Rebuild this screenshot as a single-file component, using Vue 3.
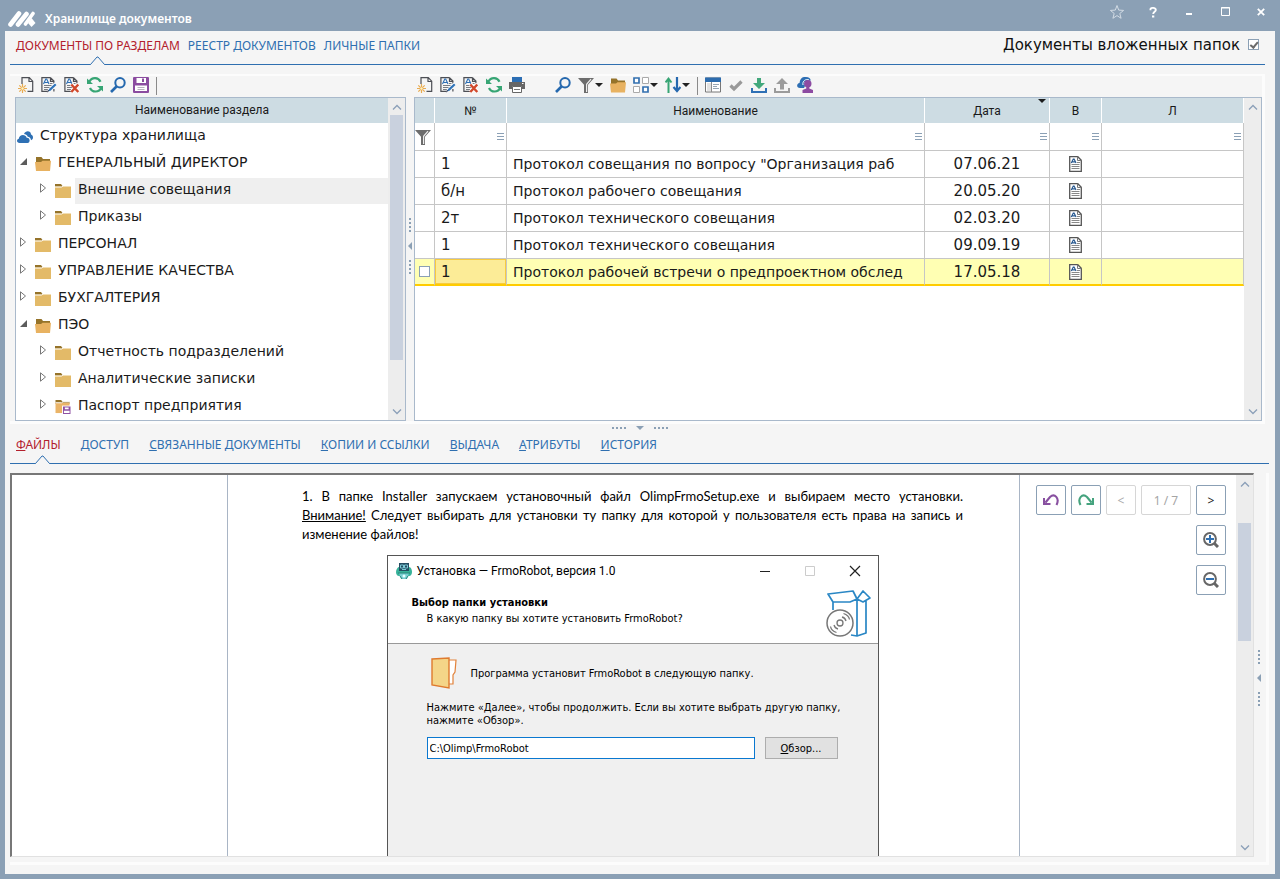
<script setup>
import { ref } from 'vue'

const mainTabs = ['ДОКУМЕНТЫ ПО РАЗДЕЛАМ', 'РЕЕСТР ДОКУМЕНТОВ', 'ЛИЧНЫЕ ПАПКИ']
const activeMain = ref(0)
const detailTabs = ['ФАЙЛЫ', 'ДОСТУП', 'СВЯЗАННЫЕ ДОКУМЕНТЫ', 'КОПИИ И ССЫЛКИ', 'ВЫДАЧА', 'АТРИБУТЫ', 'ИСТОРИЯ']
const activeDetail = ref(0)
const nested = ref(true)
const installPath = ref('C:\\Olimp\\FrmoRobot')

const windowButtons = [
  { icon: 'star', label: 'В избранное' },
  { icon: 'help', label: 'Справка' },
  { icon: 'min', label: 'Свернуть' },
  { icon: 'max', label: 'Развернуть' },
  { icon: 'close', label: 'Закрыть' }
]

const sectionTools = [
  { icon: 'new', label: 'Создать раздел' },
  { icon: 'edit', label: 'Изменить раздел' },
  { icon: 'delete', label: 'Удалить раздел' },
  { icon: 'refresh', label: 'Обновить' },
  { icon: 'search', label: 'Найти' },
  { icon: 'save', label: 'Сохранить' }
]

const documentTools = [
  { icon: 'new', label: 'Создать документ' },
  { icon: 'edit', label: 'Изменить документ' },
  { icon: 'delete', label: 'Удалить документ' },
  { icon: 'refresh', label: 'Обновить' },
  { icon: 'print', label: 'Печать' },
  { icon: 'search', label: 'Найти', gap: true },
  { icon: 'filter', label: 'Фильтр', menu: true },
  { icon: 'open', label: 'Открыть' },
  { icon: 'group', label: 'Группировка', menu: true },
  { icon: 'sort', label: 'Сортировка', menu: true },
  { sep: true },
  { icon: 'form', label: 'Карточка' },
  { icon: 'check', label: 'Утвердить' },
  { icon: 'download', label: 'Загрузить' },
  { icon: 'upload', label: 'Выгрузить' },
  { icon: 'share', label: 'Доступ' }
]

const tree = [
  { name: 'ГЕНЕРАЛЬНЫЙ ДИРЕКТОР', level: 1, open: true, icon: 'open' },
  { name: 'Внешние совещания', level: 2, icon: 'folder', selected: true },
  { name: 'Приказы', level: 2, icon: 'folder' },
  { name: 'ПЕРСОНАЛ', level: 1, icon: 'folder' },
  { name: 'УПРАВЛЕНИЕ КАЧЕСТВА', level: 1, icon: 'folder' },
  { name: 'БУХГАЛТЕРИЯ', level: 1, icon: 'folder' },
  { name: 'ПЭО', level: 1, open: true, icon: 'open' },
  { name: 'Отчетность подразделений', level: 2, icon: 'folder' },
  { name: 'Аналитические записки', level: 2, icon: 'folder' },
  { name: 'Паспорт предприятия', level: 2, icon: 'passport' }
]

const columns = [
  { key: 'num', title: '№' },
  { key: 'name', title: 'Наименование' },
  { key: 'date', title: 'Дата', sorted: true },
  { key: 'kind', title: 'В' },
  { key: 'link', title: 'Л' }
]

const documents = [
  { num: '1', name: 'Протокол совещания по вопросу "Организация раб', date: '07.06.21' },
  { num: 'б/н', name: 'Протокол рабочего совещания', date: '20.05.20' },
  { num: '2т', name: 'Протокол технического совещания', date: '02.03.20' },
  { num: '1', name: 'Протокол технического совещания', date: '09.09.19' },
  { num: '1', name: 'Протокол рабочей встречи о предпроектном обслед', date: '17.05.18', current: true }
]
</script>

<template>
  <div class="window">
    <svg class="sprite" aria-hidden="true">
      <symbol id="i-star" viewBox="0 0 16 16"><path d="M8 1.500l1.700 4.600 4.900.3-3.800 3.100 1.300 4.800L8 11.600l-4.100 2.700 1.300-4.800-3.800-3.100 4.900-.3z" fill="none" stroke="#d3dce5" /></symbol>
      <symbol id="i-help" viewBox="0 0 16 16"><path d="M5.500 6.200V5c0-1.400 5.500-1.800 5.300 1 0 1.900-2.600 1.800-2.600 4M7 12.500h2.300" fill="none" stroke="#fff" stroke-width="1.900" /></symbol>
      <symbol id="i-min" viewBox="0 0 16 16"><path d="M5 10h6" stroke="#fff" stroke-width="2" /></symbol>
      <symbol id="i-max" viewBox="0 0 16 16"><path d="M4.500 3.500h8v8h-8zM4 4h9" fill="none" stroke="#fff" /></symbol>
      <symbol id="i-close" viewBox="0 0 16 16"><path d="M4.800 4.800l6.400 6.400M11.200 4.800l-6.400 6.400" stroke="#fff" stroke-width="1.800" /></symbol>

      <symbol id="i-new" viewBox="0 0 16 16"><path d="M4 7V.600h7.300l3.400 3.600v10.200H9.500M11 .8v3.700h3.500" fill="none" stroke="#4d4f55" stroke-width="1.200" /><path d="M4.500 7v9M0 11.500h9M1.300 8.300l6.400 6.400M7.700 8.300l-6.400 6.400" stroke="#e9ab50" stroke-width="1.200" /><circle cx="4.500" cy="11.500" r="1.200" fill="#fff3c4" /></symbol>
      <symbol id="i-page" viewBox="0 0 16 16"><path d="M9.500.600H.900v13.800H7M9.500.600l3.400 3.500v3M9.500.8v3.500h3.400M12.900 12v2.400" fill="none" stroke="#4d4f55" stroke-width="1.200" /><path d="M2.500 7L4.800 2h.9L8 7M3.800 5.500h3.400" fill="none" stroke="#2c6eb4" stroke-width="1.100" /><path d="M9 6.500h2.500M3 8.500h8M3 10.500h6M3 12.500h4" stroke="#777b82" /></symbol>
      <symbol id="i-edit" viewBox="0 0 16 16"><use href="#i-page" /><path d="M6 15l1-3 6.500-6.500L16 7.500 9.500 14z" fill="#fff" /><path d="M7 14.500L8 12l6-5.500 1.500 1.500-6 5.700z" fill="#2f73b8" /><path d="M6.500 15.200l1-2.200" stroke="#334" /></symbol>
      <symbol id="i-delete" viewBox="0 0 16 16"><use href="#i-page" /><path d="M7.500 7l7 8M14.500 7l-7 8" stroke="#fff" stroke-width="4" /><path d="M7.300 7.500l7 7.500M14.300 7.500l-7 7.500" stroke="#d14a2d" stroke-width="2.500" /></symbol>
      <symbol id="i-refresh" viewBox="0 0 16 16"><path d="M2.200 5C5-.500 11.500.300 13.500 4.800M14.500 10.500c-2.500 5.500-9.500 5-11.500.5" fill="none" stroke="#37a574" stroke-width="2.200" /><path d="M0 1.500V7h6zM16 14.500V9h-6z" fill="#37a574" /></symbol>
      <symbol id="i-search" viewBox="0 0 16 16"><circle cx="10" cy="5.800" r="4.700" fill="none" stroke="#2568ae" stroke-width="2" /><path d="M6.500 9.500L1 15" stroke="#2568ae" stroke-width="2.600" /></symbol>
      <symbol id="i-save" viewBox="0 0 16 16"><path d="M1 0h14a1 1 0 011 1v14a1 1 0 01-1 1H1a1 1 0 01-1-1V1a1 1 0 011-1z" fill="#8b4ca0" /><path d="M3.500 1h9.500v5H3.500z" fill="#fff" /><path d="M9 1.500h2v3.500H9z" fill="#8b4ca0" /><path d="M2 8.500h12V14H2z" fill="#fff" /><path d="M4.500 10.500h7M4.500 12.500h7" stroke="#b9b0bf" /></symbol>
      <symbol id="i-print" viewBox="0 0 16 16"><path d="M3 0h10v5H3z" fill="#2c6eb4" /><path d="M0 5h16v7h-3V9.500H3V12H0z" fill="#666" /><path d="M3.500 9.500h9v6h-9z" fill="#fff" stroke="#666" /><path d="M5 12.500h6" stroke="#777" /><path d="M13 6.500h1.500" stroke="#fff" /></symbol>
      <symbol id="i-filter" viewBox="0 0 16 16"><path d="M0 1h16l-6 6.700V16H6V7.700z" fill="#6d6d6d" /><path d="M13 2.200L8.600 7.300V15" fill="none" stroke="#eee" stroke-width="1.200" /></symbol>
      <symbol id="i-folder" viewBox="0 0 16 15"><path d="M0 1h6l1.500 2H16v2H0z" fill="#95732a" /><path d="M0 3.500h6.500L8 2.900h8V15H0z" fill="#e3ba68" /><path d="M0 4h6.500L8 3h8" fill="none" stroke="#fff" /></symbol>
      <symbol id="i-open" viewBox="0 0 16 15"><path d="M1 1h5.500L8 3h7v4H1z" fill="#95732a" /><path d="M0 6h6l1.500-1.200H16L15 15H1z" fill="#e8b261" /></symbol>
      <symbol id="i-passport" viewBox="0 0 16 16"><path d="M0 1h6l1.500 2H15v2H0z" fill="#95732a" /><path d="M0 4h15v11H0z" fill="#eab468" /><path d="M0 4h6.500L8 3h7" fill="none" stroke="#fff" /><path d="M7 7h9v9H7z" fill="#fff" /><path d="M8 8h8v8H8z" fill="#8f51a3" /><path d="M10 9h4v2h-4zM9 12.500h6V15H9z" fill="#fff" /></symbol>
      <symbol id="i-group" viewBox="0 0 16 16"><path d="M1 1h5v5H1zM10 10h5v5h-5z" fill="#fff" stroke="#3370b0" stroke-width="1.700" /><path d="M9.500.500h6v6h-6zM.500 9.500h6v6h-6z" fill="#fff" stroke="#aaa" /></symbol>
      <symbol id="i-sort" viewBox="0 0 16 16"><path d="M3.500 16V2M.500 5.500l3-3.800 3 3.800" fill="none" stroke="#37a574" stroke-width="2" /><path d="M12 0v14M8.500 10l3.500 4 3.500-4" fill="none" stroke="#2568ae" stroke-width="2.200" /></symbol>
      <symbol id="i-form" viewBox="0 0 16 16"><path d="M.500 1h15v14H.500z" fill="#fff" stroke="#777" /><path d="M0 .500h16V5H0z" fill="#2d6cae" /><path d="M2 6h4v8H2z" fill="#e2e2e2" /><path d="M6.500 5v10" stroke="#8c8c8c" /><path d="M8 7.500h6M8 9.500h4M8 11.500h6" stroke="#98a6b4" /></symbol>
      <symbol id="i-check" viewBox="0 0 16 16"><path d="M2.500 8.500L6 12l7.500-7.500" fill="none" stroke="#999" stroke-width="3.200" /></symbol>
      <symbol id="i-download" viewBox="0 0 16 16"><path d="M6 1h4v5h4l-6 6-6-6h4z" fill="#42a87c" /><path d="M1 11v4h14v-4" fill="none" stroke="#2f70b5" stroke-width="2" /></symbol>
      <symbol id="i-upload" viewBox="0 0 16 16"><path d="M6 12.500h4V7h4L8 1 2 7h4z" fill="#9b9b9b" /><path d="M1 11v4h14v-4" fill="none" stroke="#9b9b9b" stroke-width="2" /></symbol>
      <symbol id="i-share" viewBox="0 0 16 16"><path d="M3 11C-1 11-.500 6.500 2.500 6 3 1 6-.500 9 0c3 0 4.500 1.500 4.700 3.500L7 5l1 4-1 2z" fill="#2d6eb3" /><path d="M6 8c-1-4 3-6.500 6-5" fill="none" stroke="#fff" /><circle cx="10.800" cy="6.800" r="3.700" fill="#8d4ba2" /><path d="M9.300 9h3v2.500L16 13v3H5.500v-3l3.800-1.500z" fill="#8d4ba2" /></symbol>
      <symbol id="i-cloud" viewBox="0 0 16 12"><path d="M7 3c1.500-4 7-3.500 7 .5 1.500.5 2 1.700 2 3 0 1.500-.8 2.300-2 2.800-.2-2.200-1.500-3.500-3.200-3.600C10 4 8.500 3.200 7 3z" fill="#2e70b4" /><path d="M2.500 12C-.500 12-.900 8.500 1.800 7.700 2 3.300 8.500 2.500 9.700 6.700c3.500-.3 4 4.700.8 5.300z" fill="#2e70b4" /></symbol>
      <symbol id="i-doc" viewBox="0 0 13 16"><path d="M.700.700h8.100l3.500 3.600v11H.700z" fill="#fff" stroke="#555" stroke-width="1.300" /><path d="M8.500.700v3.800h4" fill="none" stroke="#777" /><path d="M2.300 7L4.300 3h.8L7 7M3.300 5.800h3" fill="none" stroke="#27588f" stroke-width="1.200" /><path d="M8 6.500h3M2.500 8.500h8M2.500 10.500h8M2.500 12.500h8" stroke="#888" /></symbol>
      <symbol id="i-undo" viewBox="0 0 16 12"><path d="M13.500 11C17 4 11.500-1 7 3L2.500 8.500" fill="none" stroke="#8850a0" stroke-width="2.100" /><path d="M0 4v7h7.500V9H3L2 8V4z" fill="#8850a0" /></symbol>
      <symbol id="i-redo" viewBox="0 0 16 12"><path d="M2.500 11C-1 4 4.500-1 9 3l4.500 5.500" fill="none" stroke="#45a37e" stroke-width="2.100" /><path d="M16 4v7H8.500V9H13l1-1V4z" fill="#45a37e" /></symbol>
      <symbol id="i-lens" viewBox="0 0 16 16"><circle cx="7" cy="7" r="5.900" fill="none" stroke="#666" stroke-width="2" /><path d="M11 11l4 4" stroke="#666" stroke-width="3" /></symbol>
      <symbol id="i-up" viewBox="0 0 10 6"><path d="M1 5.500l4-4 4 4" fill="none" stroke="#8b9fb8" stroke-width="1.300" /></symbol>
      <symbol id="i-down" viewBox="0 0 10 6"><path d="M1 .5l4 4 4-4" fill="none" stroke="#8b9fb8" stroke-width="1.300" /></symbol>
      <symbol id="i-closed" viewBox="0 0 7 10"><path d="M.500.800v8.400L5.500 5z" fill="#fff" stroke="#777" /></symbol>
      <symbol id="i-opened" viewBox="0 0 7 7"><path d="M7 0v7H0z" fill="#5c5c5c" /></symbol>
    </svg>

    <header class="titlebar">
      <svg class="logo" viewBox="0 0 28 16"><path d="M2.500 13.500L11 2.500M10 13.500L18.500 3" stroke="#fff" stroke-width="4.600" stroke-linecap="round" /><path d="M17.500 13L25 2.500" stroke="#fff" stroke-width="3.600" stroke-linecap="round" /><path d="M23.500 7l4 5-4 4-3.500-4z" fill="#fff" /></svg>
      <h1>Хранилище документов</h1>
      <div class="window-buttons">
        <button v-for="b in windowButtons" :key="b.icon" type="button" :aria-label="b.label">
          <svg width="16" height="16"><use :href="'#i-' + b.icon" /></svg>
        </button>
      </div>
    </header>

    <main class="content">
      <nav class="tabs main-tabs">
        <button v-for="(t, i) in mainTabs" :key="t" type="button" :class="{ active: i === activeMain }" @click="activeMain = i">
          {{ t }}
          <svg v-if="i === activeMain" class="notch" width="15" height="9" viewBox="0 0 15 9"><path d="M0 9L7.500.800 15 9z" fill="#f5f5f5" /><path d="M0 8.500h.5L7 1h1l6.500 7.500h.5" fill="none" stroke="#2f6fb0" /></svg>
        </button>
        <label class="nested">Документы вложенных папок <input v-model="nested" type="checkbox" class="box" /></label>
      </nav>

      <section class="workspace">
        <div class="pane">
          <div class="toolbar">
            <button v-for="t in sectionTools" :key="t.icon" type="button" :aria-label="t.label"><svg width="16" height="16"><use :href="'#i-' + t.icon" /></svg></button>
            <span class="sep"></span>
          </div>
          <div class="panel">
            <div class="panel-main">
              <div class="tree-head">Наименование раздела</div>
              <ul class="tree">
                <li class="root"><svg width="16" height="12"><use href="#i-cloud" /></svg><span>Структура хранилища</span></li>
                <li v-for="n in tree" :key="n.name" :class="['level' + n.level, { selected: n.selected }]">
                  <button type="button" class="toggle" :aria-label="n.open ? 'Свернуть' : 'Раскрыть'">
                    <svg v-if="n.open" width="7" height="7"><use href="#i-opened" /></svg>
                    <svg v-else width="7" height="10"><use href="#i-closed" /></svg>
                  </button>
                  <svg class="node-icon" width="16" height="15"><use :href="'#i-' + n.icon" /></svg>
                  <span>{{ n.name }}</span>
                </li>
              </ul>
            </div>
            <div class="scroll tree-scroll">
              <button type="button" aria-label="Вверх"><svg width="10" height="6"><use href="#i-up" /></svg></button>
              <div class="track"><div class="thumb"></div></div>
              <button type="button" aria-label="Вниз"><svg width="10" height="6"><use href="#i-down" /></svg></button>
            </div>
          </div>
        </div>

        <div class="splitter vertical panes"><i></i><b></b><i></i></div>

        <div class="pane">
          <div class="toolbar">
            <template v-for="(t, i) in documentTools" :key="i">
              <span v-if="t.sep" class="sep"></span>
              <button v-else type="button" :class="{ gap: t.gap }" :aria-label="t.label">
                <svg width="16" height="16"><use :href="'#i-' + t.icon" /></svg><span v-if="t.menu" class="arrow"></span>
              </button>
            </template>
          </div>
          <div class="panel">
            <div class="panel-main">
              <table>
                <colgroup><col class="c-mark" /><col class="c-num" /><col /><col class="c-date" /><col class="c-kind" /><col class="c-link" /></colgroup>
                <thead>
                  <tr>
                    <th></th>
                    <th v-for="c in columns" :key="c.key">{{ c.title }}<span v-if="c.sorted" class="sort-mark"></span></th>
                  </tr>
                </thead>
                <tbody>
                  <tr class="filters">
                    <td><svg width="16" height="16"><use href="#i-filter" /></svg></td>
                    <td v-for="c in columns" :key="c.key">
                      <div><input type="text" :aria-label="'Фильтр: ' + c.title" /><button type="button" :aria-label="'Условие: ' + c.title"><i></i></button></div>
                    </td>
                  </tr>
                  <tr v-for="(d, i) in documents" :key="i" :class="{ current: d.current }">
                    <td class="mark"><input v-if="d.current" type="checkbox" class="box" aria-label="Выбрать документ" /></td>
                    <td class="num">{{ d.num }}</td>
                    <td class="name">{{ d.name }}</td>
                    <td class="date">{{ d.date }}</td>
                    <td class="kind"><svg width="13" height="16"><use href="#i-doc" /></svg></td>
                    <td></td>
                  </tr>
                </tbody>
              </table>
            </div>
            <div class="scroll">
              <button type="button" aria-label="Вверх"><svg width="10" height="6"><use href="#i-up" /></svg></button>
              <div class="track"></div>
              <button type="button" aria-label="Вниз"><svg width="10" height="6"><use href="#i-down" /></svg></button>
            </div>
          </div>
        </div>
      </section>

      <div class="splitter horizontal"><i></i><b></b><i></i></div>

      <nav class="tabs detail-tabs">
        <button v-for="(t, i) in detailTabs" :key="t" type="button" :class="{ active: i === activeDetail }" @click="activeDetail = i">
          <u>{{ t[0] }}</u>{{ t.slice(1) }}
          <svg v-if="i === activeDetail" class="notch" width="15" height="9" viewBox="0 0 15 9"><path d="M0 9L7.500.800 15 9z" fill="#f5f5f5" /><path d="M0 8.500h.5L7 1h1l6.500 7.500h.5" fill="none" stroke="#2f6fb0" /></svg>
        </button>
      </nav>

      <section class="lower">
        <div class="viewer">
          <div class="margin"></div>
          <article class="page">
            <p>1. В папке Installer запускаем установочный файл OlimpFrmoSetup.exe и выбираем место установки. <u>Внимание!</u> Следует выбирать для установки ту папку для которой у пользователя есть права на запись и изменение файлов!</p>
            <div class="dialog">
              <div class="dialog-title">
                <svg width="16" height="17" viewBox="0 0 16 17"><path d="M0 9c0-3 2-5 3-5h10c2 0 3 3 3 5s-1 4-3 4H3c-2 0-3-2-3-4z" fill="#37b29a" /><path d="M3 0h10v8H3z" fill="#244d62" /><path d="M4.500 2h3v3h-3zM8.500 2h3v3h-3zM6 6.500h4" fill="none" stroke="#7cc9d5" /><path d="M3 10h10l-2 6H5z" fill="#78ced1" /><path d="M2 10h12M4 13l2 3M12 13l-2 3" stroke="#288477" /><circle cx="8" cy="13" r="1.500" fill="#e5ffff" /></svg>
                <span>Установка — FrmoRobot, версия 1.0</span>
                <div class="dialog-buttons">
                  <button type="button" aria-label="Свернуть"><svg width="12" height="12"><path d="M1 6.500h10" stroke="#222" /></svg></button>
                  <button type="button" aria-label="Развернуть" disabled><svg width="12" height="12"><path d="M1.500 1.500h9v9h-9z" fill="none" stroke="#ccc" /></svg></button>
                  <button type="button" aria-label="Закрыть"><svg width="12" height="12"><path d="M1 1l10 10M11 1L1 11" stroke="#222" stroke-width="1.200" /></svg></button>
                </div>
              </div>
              <div class="dialog-head">
                <div>
                  <h2>Выбор папки установки</h2>
                  <p>В какую папку вы хотите установить FrmoRobot?</p>
                </div>
                <svg width="46" height="48" viewBox="0 0 46 48" fill="none"><g stroke="#2a87c5" stroke-width="1.700" stroke-linejoin="round"><path d="M2 4l25-3 4 8-7 3H7zM31 9l6-8 7 7-7 4zM7 12v8M31 9v37l-6-1M31 46l9-3V11" /></g><circle cx="14" cy="33" r="13" fill="#fff" stroke="#777" stroke-width="1.500" /><circle cx="14" cy="33" r="3" stroke="#777" stroke-width="1.300" /><path d="M16 27c2 .5 3.500 2 4 4M17.500 23.500c3 1 5.500 3 6 6M12 39c-2-.5-3.500-2-4-4M10.500 42.500c-3-1-5.500-3-6-6" stroke="#777" stroke-width="1.300" /></svg>
              </div>
              <div class="dialog-body">
                <div class="target"><svg width="26" height="32" viewBox="0 0 26 32"><path d="M17 3h8l-1 12-2 3v9h-5z" fill="#fff" stroke="#e2823a" stroke-width="1.200" /><path d="M1 2l17-1v30L1 28z" fill="#f4d588" stroke="#df7a2e" stroke-width="1.400" /></svg><span>Программа установит FrmoRobot в следующую папку.</span></div>
                <p>Нажмите «Далее», чтобы продолжить. Если вы хотите выбрать другую папку, нажмите «Обзор».</p>
                <div class="path"><input v-model="installPath" type="text" aria-label="Папка установки" /><button type="button"><u>О</u>бзор...</button></div>
              </div>
            </div>
          </article>
          <div class="view-tools">
            <div>
              <button type="button" aria-label="Повернуть влево"><svg width="16" height="12"><use href="#i-undo" /></svg></button>
              <button type="button" aria-label="Повернуть вправо"><svg width="16" height="12"><use href="#i-redo" /></svg></button>
              <button type="button" aria-label="Предыдущая страница" disabled>&lt;</button>
              <output>1 / 7</output>
              <button type="button" aria-label="Следующая страница">&gt;</button>
            </div>
            <button type="button" aria-label="Увеличить"><svg width="16" height="16"><use href="#i-lens" /><path d="M3 7h8M7 3v8" stroke="#2f6fb0" stroke-width="2" /></svg></button>
            <button type="button" aria-label="Уменьшить"><svg width="16" height="16"><use href="#i-lens" /><path d="M3 7h8" stroke="#2f6fb0" stroke-width="2" /></svg></button>
          </div>
          <div class="scroll view-scroll">
            <button type="button" aria-label="Вверх"><svg width="10" height="6"><use href="#i-up" /></svg></button>
            <div class="track"><div class="thumb"></div></div>
            <button type="button" aria-label="Вниз"><svg width="10" height="6"><use href="#i-down" /></svg></button>
          </div>
        </div>
        <div class="splitter vertical side"><i></i><b></b><i></i></div>
      </section>
    </main>
  </div>
</template>

<style>
html, body { margin: 0; background: #8ba0b5; }
</style>

<style scoped>
* { box-sizing: border-box; }
button { border: 0; padding: 0; background: none; font: inherit; color: inherit; }
svg { display: block; flex: none; }
h1, h2, p, ul { margin: 0; padding: 0; }
.sprite { position: absolute; width: 0; height: 0; }

.window {
  height: 100vh;
  display: flex;
  flex-direction: column;
  padding: 0 5px 5px;
  background: #8ba0b5;
  font-family: "Noto Sans", "Open Sans", sans-serif;
  font-size: 12px;
  color: #1a1a1a;
}
.titlebar { flex: none; height: 31px; display: flex; align-items: flex-start; padding-left: 3px; }
.logo { width: 28px; height: 16px; margin-top: 11px; }
.titlebar h1 { margin: 10px 0 0 9px; color: #fff; font-size: 12px; line-height: 18px; font-weight: 600; }
.window-buttons { display: flex; gap: 20px; margin: 4px 6px 0 auto; }

.content { flex: 1; min-height: 0; display: flex; flex-direction: column; background: #f5f5f5; padding: 0 6px 9px 5px; }
.tabs { flex: none; display: flex; border-bottom: 1px solid #2f6fb0; color: #2f6fb0; padding-left: 6px; }
.tabs button { position: relative; display: block; line-height: 16px; white-space: nowrap; }
.tabs .active { color: #b3202c; }
.notch { position: absolute; bottom: -1px; left: 50%; margin-left: -8px; }
.main-tabs { height: 34px; gap: 8px; margin-right: 4px; }
.main-tabs button { padding-bottom: 4px; }
.nested { margin-left: auto; padding: 4px 6px 0 0; display: flex; gap: 8px; font-family: "DejaVu Sans", sans-serif; font-size: 15px; line-height: 20px; color: #111; }
.box { appearance: none; width: 11px; height: 11px; margin: 0; border: 1px solid #8ba0b5; background: #fff; display: grid; place-items: center; }
.nested .box { margin-top: 4px; }
.box:checked::before { content: ""; width: 3px; height: 6px; border: solid #6b6b6b; border-width: 0 2px 2px 0; transform: rotate(40deg) translate(0, -1px); }

.workspace { flex: none; margin: 9px 4px 0 0; padding-left: 5px; display: grid; grid-template-columns: 391px 8px minmax(0, 1fr); border: solid #fcfcfc; border-width: 2px 3px 3px 0; }
.pane { display: flex; flex-direction: column; min-width: 0; }
.toolbar { height: 21px; display: flex; align-items: flex-start; gap: 7px; padding: 1px 3px 0; }
.toolbar button { display: flex; align-items: center; }
.toolbar .gap { margin-left: 23px; }
.arrow { margin-left: 1px; border: solid transparent; border-width: 4px 4px 0; border-top-color: #222; }
.sep { width: 1px; height: 18px; background: #8a8a8a; }
.panel { flex: 1; display: flex; border: 1px solid #a9b9cb; background: #fff; }
.panel-main { flex: 1; min-width: 0; }
.tree-head { height: 25px; background: #cddce3; text-align: center; line-height: 25px; font-family: Roboto, "Noto Sans", sans-serif; }
.tree { list-style: none; font-family: "DejaVu Sans", sans-serif; font-size: 14px; }
.tree li { display: flex; align-items: center; height: 27px; }
.tree span { flex: 1; height: 26px; line-height: 22px; padding-left: 3px; white-space: nowrap; }
.tree .root { padding-left: 1px; }
.tree .root span { padding-left: 7px; }
.tree .toggle { flex: none; width: 7px; margin: 0 8px 5px 0; }
.tree .level1 { padding-left: 4px; }
.tree .level2 { padding-left: 24px; }
.tree .node-icon { margin-right: 4px; }
.tree .selected span { background: #efefef; }

.scroll { flex: none; width: 17px; display: flex; flex-direction: column; background: #ededed; }
.scroll button { height: 17px; display: grid; place-items: center; }
.track { flex: 1; padding: 0 2px; }
.thumb { background: #c9d1de; }
.tree-scroll .thumb { height: 85%; }

.splitter { display: flex; align-items: center; justify-content: center; }
.splitter i { display: block; }
.splitter b { border: solid transparent; }
.vertical { flex-direction: column; gap: 10px; }
.vertical i { width: 2px; height: 14px; background: repeating-linear-gradient(#8ba0b5 0 2px, transparent 2px 4px); }
.vertical b { border-width: 4px 4px 4px 0; border-right-color: #8ba0b5; }
.panes { padding-bottom: 6px; }
.horizontal { flex: none; height: 8px; gap: 10px; }
.horizontal i { width: 14px; height: 2px; background: repeating-linear-gradient(90deg, #8ba0b5 0 2px, transparent 2px 4px); }
.horizontal b { border-width: 4px 4px 0; border-top-color: #8ba0b5; }

table { width: 100%; table-layout: fixed; border-spacing: 0; font-family: "DejaVu Sans", sans-serif; font-size: 14px; }
.c-mark { width: 20px; }
.c-num { width: 72px; }
.c-date { width: 125px; }
.c-kind { width: 52px; }
.c-link { width: 142px; }
th { position: relative; height: 25px; padding: 0; background: #cddce3; border-right: 1px solid #fff; font: 12px/20px Roboto, "Noto Sans", sans-serif; }
.sort-mark { position: absolute; right: 3px; top: 1px; border: solid transparent; border-width: 4px 4px 0; border-top-color: #1c1c1c; }
td { height: 27px; padding: 0; border: solid #c6c6c6; border-width: 0 1px 1px 0; line-height: 20px; white-space: nowrap; overflow: hidden; }
.filters td { height: 28px; }
.filters div { display: flex; align-items: center; padding-right: 2px; }
.filters input { flex: 1; min-width: 0; border: 0; padding: 0 4px; height: 20px; background: none; outline: 0; font: inherit; }
.filters i { display: block; width: 7px; height: 7px; background: repeating-linear-gradient(#8ba0b5 0 1px, transparent 1px 3px); }
.num, .name { padding-left: 6px; }
.num, .date { font-size: 15px; }
.date { text-align: center; }
.kind svg { margin: 0 auto; }
.mark .box { margin: 0 auto; }
.current td { background: #ffffb3; border-bottom: 2px solid #fc0; }
.current .num { background: #fcec97; box-shadow: inset 0 0 0 1px #f7cb3f; }

.detail-tabs { height: 32px; gap: 20px; padding-top: 1px; }
.detail-tabs button { padding-bottom: 7px; }
.detail-tabs .notch { margin-left: -3px; }
.lower { flex: 1; min-height: 0; display: flex; margin-top: 9px; padding-bottom: 5px; border: solid #fcfcfc; border-width: 0 3px 3px 0; }
.viewer { flex: 1; min-width: 0; display: grid; grid-template-columns: 215px minmax(0, 1fr) 216px 17px; background: #fff; border: 2px solid #696969; border-color: #777 #e1e1e1 #e1e1e1 #777; border-right-width: 1px; border-bottom-width: 1px; overflow: hidden; }
.page { border: solid #a9b5c5; border-width: 0 1px; padding: 12px 56px 0 74px; overflow: hidden; }
.page > p { font-family: Lato, "Open Sans", sans-serif; font-size: 13px; line-height: 19px; text-align: justify; color: #000; }
.dialog { margin: 11px auto 0; width: 492px; height: 420px; border: 1px solid #555; background: #f0f0f0; font-family: "DejaVu Sans Condensed", "DejaVu Sans", sans-serif; font-size: 11px; line-height: 13px; color: #000; }
.dialog-title { height: 30px; display: flex; align-items: center; gap: 5px; padding: 0 17px 0 8px; background: #fff; font-family: Roboto, "Noto Sans", sans-serif; font-size: 12px; line-height: 16px; }
.dialog-buttons { margin-left: auto; display: flex; gap: 33px; }
.dialog-head { display: flex; justify-content: space-between; height: 58px; padding: 4px 6px 0 24px; background: #fff; border-bottom: 1px solid #999; }
.dialog-head h2 { margin-top: 6px; font-size: 11px; line-height: 13px; }
.dialog-head p { margin: 3px 0 0 15px; }
.dialog-body { padding: 13px 20px 0 39px; }
.target { display: flex; align-items: center; gap: 14px; padding-left: 4px; }
.dialog-body p { margin-top: 12px; }
.path { display: flex; gap: 10px; margin: 10px 20px 0 0; }
.path input { flex: 1; min-width: 0; height: 22px; border: 1px solid #0a78d0; background: #fff; padding: 0 2px; font: inherit; }
.path button { width: 73px; height: 22px; border: 1px solid #adadad; background: #e1e1e1; }
.view-tools { display: flex; flex-direction: column; align-items: flex-end; gap: 10px; padding: 10px 10px 0 0; }
.view-tools div { display: flex; gap: 5px; }
.view-tools button, .view-tools output { width: 30px; height: 30px; border: 1px solid #8ba0b5; border-radius: 2px; display: grid; place-items: center; }
.view-tools output { width: 50px; border-color: #d6d6d6; color: #a5a5a5; }
.view-tools button:disabled { border-color: #d6d6d6; color: #aaa; }
.view-scroll .track { padding-top: 31px; }
.view-scroll .thumb { height: 118px; }
.side { width: 12px; padding: 26px 2px 0 0; }
</style>
